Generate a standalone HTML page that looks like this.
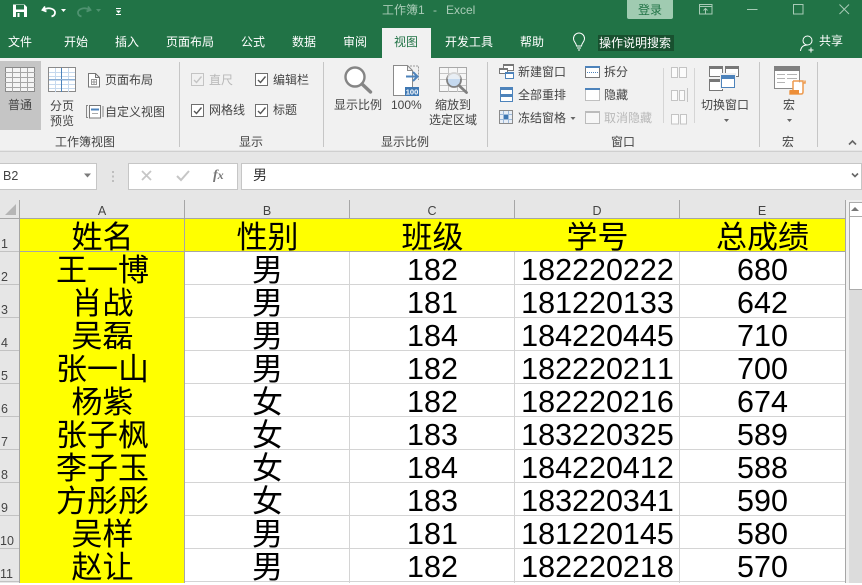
<!DOCTYPE html>
<html><head><meta charset="utf-8"><style>
html,body{margin:0;padding:0}
body{width:862px;height:583px;overflow:hidden;position:relative;background:#fff;font-family:"Liberation Sans","Noto Sans CJK SC",sans-serif;font-size:12px;color:#444}
.a{position:absolute}
.t{position:absolute;white-space:nowrap;line-height:16px;height:16px}
.w{color:#fff}.g{color:#b8b8b8}.c{text-align:center}
.r{position:absolute;left:20px;width:825px;height:33px;display:flex;color:#000;font-size:30.5px;line-height:33px;text-align:center;font-kerning:none}
.r div{width:165px;flex:none;position:relative;top:2px}
.r div:nth-child(1),.r div:nth-child(2){font-size:31px}
.r.z div{font-size:31px}
.n{position:absolute;left:1px;width:18px;line-height:14px;font-size:12.5px;color:#444}
.h{position:absolute;top:203px;line-height:16px;font-size:12.5px;color:#444;text-align:center}
</style></head><body>
<div class="a" style="left:0;top:0;width:862px;height:58px;background:#217346"></div>
<div class="a" style="left:382px;top:28px;width:49px;height:30px;background:#f1f1f1"></div>
<div class="a" style="left:0;top:58px;width:862px;height:92px;background:#f1f1f1"></div>
<div class="a" style="left:0;top:150px;width:862px;height:50px;background:#e6e6e6"></div>
<div class="a" style="left:0;top:151px;width:862px;height:1px;background:#cfcfcf"></div>
<div class="a" style="left:0;top:61px;width:41px;height:69px;background:#c5c5c5"></div>

<div class="a" style="left:627px;top:0;width:46px;height:19px;background:#a0cbb1;border-radius:0 0 2px 2px"></div>
<div class="a" style="left:598px;top:35px;width:76px;height:16px;background:#18502f"></div>

<div class="t" style="left:382px;top:2px;color:#a9cbb7">工作簿1</div>
<div class="t" style="left:433px;top:2px;color:#a9cbb7">-</div>
<div class="t" style="left:446px;top:2px;color:#a9cbb7">Excel</div>
<div class="t" style="left:638px;top:2px;color:#217346">登录</div>
<div class="t w" style="left:8px;top:34px">文件</div>
<div class="t w" style="left:64px;top:34px">开始</div>
<div class="t w" style="left:115px;top:34px">插入</div>
<div class="t w" style="left:166px;top:34px">页面布局</div>
<div class="t w" style="left:241px;top:34px">公式</div>
<div class="t w" style="left:292px;top:34px">数据</div>
<div class="t w" style="left:343px;top:34px">审阅</div>
<div class="t" style="left:394px;top:34px;color:#217346">视图</div>
<div class="t w" style="left:445px;top:34px">开发工具</div>
<div class="t w" style="left:520px;top:34px">帮助</div>
<div class="t w" style="left:599px;top:35px">操作说明搜索</div>
<div class="t w" style="left:819px;top:33px">共享</div>

<div class="t" style="left:8px;top:97px">普通</div>
<div class="t" style="left:50px;top:98px">分页</div>
<div class="t" style="left:50px;top:113px">预览</div>
<div class="t" style="left:105px;top:72px">页面布局</div>
<div class="t" style="left:105px;top:104px">自定义视图</div>
<div class="t" style="left:55px;top:134px">工作簿视图</div>
<div class="t g" style="left:209px;top:72px">直尺</div>
<div class="t" style="left:273px;top:72px">编辑栏</div>
<div class="t" style="left:209px;top:102px">网格线</div>
<div class="t" style="left:273px;top:102px">标题</div>
<div class="t" style="left:239px;top:134px">显示</div>
<div class="t" style="left:334px;top:97px">显示比例</div>
<div class="t" style="left:391px;top:97px">100%</div>
<div class="t" style="left:435px;top:97px">缩放到</div>
<div class="t" style="left:429px;top:112px">选定区域</div>
<div class="t" style="left:381px;top:134px">显示比例</div>
<div class="t" style="left:518px;top:64px">新建窗口</div>
<div class="t" style="left:518px;top:87px">全部重排</div>
<div class="t" style="left:518px;top:110px">冻结窗格</div>
<div class="t" style="left:604px;top:64px">拆分</div>
<div class="t" style="left:604px;top:87px">隐藏</div>
<div class="t g" style="left:604px;top:110px">取消隐藏</div>
<div class="t" style="left:611px;top:134px">窗口</div>
<div class="t" style="left:701px;top:97px">切换窗口</div>
<div class="t" style="left:783px;top:97px">宏</div>
<div class="t" style="left:782px;top:134px">宏</div>

<div class="a" style="left:0;top:163px;width:96px;height:25px;background:#fff;border:1px solid #c6c6c6;border-left:0"></div>
<div class="a" style="left:128px;top:163px;width:108px;height:25px;background:#fff;border:1px solid #c6c6c6"></div>
<div class="a" style="left:241px;top:163px;width:619px;height:25px;background:#fff;border:1px solid #c6c6c6"></div>
<div class="t" style="left:3px;top:168px;font-size:12.5px">B2</div>
<div class="t" style="left:213px;top:167px;font-family:'Liberation Serif',serif;font-style:italic;font-size:14px;font-weight:bold;color:#777">f<span style="font-size:12px">x</span></div>
<div class="t" style="left:253px;top:167px;font-size:14px;color:#333">男</div>

<!-- sheet -->
<div class="a" style="left:0;top:200px;width:845px;height:18px;background:#e6e6e6"></div>
<div class="a" style="left:0;top:218px;width:19px;height:365px;background:#e6e6e6"></div>
<div class="a" style="left:20px;top:219px;width:164px;height:364px;background:#ff0"></div>
<div class="a" style="left:185px;top:219px;width:660px;height:32px;background:#ff0"></div>
<div class="h" style="left:20px;width:164px">A</div>
<div class="h" style="left:185px;width:164px">B</div>
<div class="h" style="left:350px;width:164px">C</div>
<div class="h" style="left:515px;width:164px">D</div>
<div class="h" style="left:680px;width:164px">E</div>

<svg class="a" style="left:0;top:0" width="862" height="583" viewBox="0 0 862 583" fill="none" shape-rendering="crispEdges">
<!-- grid -->
<g fill="#d4d4d4">
<rect x="349" y="252" width="1" height="331"/><rect x="514" y="252" width="1" height="331"/><rect x="679" y="252" width="1" height="331"/>
<rect x="185" y="284" width="660" height="1"/><rect x="185" y="317" width="660" height="1"/><rect x="185" y="350" width="660" height="1"/><rect x="185" y="383" width="660" height="1"/><rect x="185" y="416" width="660" height="1"/><rect x="185" y="449" width="660" height="1"/><rect x="185" y="482" width="660" height="1"/><rect x="185" y="515" width="660" height="1"/><rect x="185" y="548" width="660" height="1"/><rect x="185" y="581" width="660" height="1"/>
</g>
<g fill="#a6a6a6">
<rect x="20" y="251" width="825" height="1"/><rect x="0" y="218" width="845" height="1"/>
<rect x="19" y="200" width="1" height="383"/><rect x="184" y="200" width="1" height="383"/><rect x="845" y="200" width="1" height="383"/>
<rect x="349" y="200" width="1" height="18"/><rect x="514" y="200" width="1" height="18"/><rect x="679" y="200" width="1" height="18"/>
</g>
<g fill="#c2c2c2"><rect x="0" y="251" width="19" height="1"/><rect x="0" y="284" width="19" height="1"/><rect x="0" y="317" width="19" height="1"/><rect x="0" y="350" width="19" height="1"/><rect x="0" y="383" width="19" height="1"/><rect x="0" y="416" width="19" height="1"/><rect x="0" y="449" width="19" height="1"/><rect x="0" y="482" width="19" height="1"/><rect x="0" y="515" width="19" height="1"/><rect x="0" y="548" width="19" height="1"/><rect x="0" y="581" width="19" height="1"/></g>
<!-- scrollbar -->
<rect x="846" y="200" width="16" height="383" fill="#f0f0f0"/>
<rect x="849" y="217" width="13" height="366" fill="#dcdcdc"/>
<rect x="849.500" y="202.500" width="13" height="14" fill="#fff" stroke="#ababab"/>
<rect x="849.500" y="216.500" width="13" height="73" fill="#fff" stroke="#ababab"/>
<path d="M851 211h8l-4-4z" fill="#777" shape-rendering="auto"/>
<path d="M5 215h11v-11z" fill="#b5b5b5" shape-rendering="auto"/>
<!-- separators -->
<g fill="#c6c6c6"><rect x="179" y="62" width="1" height="85"/><rect x="323" y="62" width="1" height="85"/><rect x="487" y="62" width="1" height="85"/><rect x="759" y="62" width="1" height="85"/><rect x="817" y="62" width="1" height="85"/></g>
<g fill="#d5d5d5"><rect x="663" y="68" width="1" height="55"/><rect x="694" y="68" width="1" height="55"/></g>

<g shape-rendering="auto">
<!-- save -->
<path d="M13 4.500h11.500l2.500 2.500v10h-14z" fill="#fff"/><rect x="16" y="5" width="8" height="4.500" fill="#217346"/><rect x="16" y="12" width="8" height="5" fill="#217346"/><rect x="17.500" y="13" width="2" height="4" fill="#fff"/>
<!-- undo/redo -->
<path d="M45 6.500l-2.500 3.500 4 1.500M43.500 10c5-3.500 12-1 11.500 3 -.2 2-1.500 3-3.500 3.500" stroke="#fff" stroke-width="1.800"/>
<path d="M61 9h5l-2.500 3z" fill="#fff"/>
<path d="M88 6.500l2.500 3.500 -4 1.500M89.500 10c-5-3.500-12-1-11.500 3 .2 2 1.500 3 3.500 3.500" stroke="#4f9270" stroke-width="1.800"/>
<path d="M96 9h5l-2.500 3z" fill="#4f9270"/>
<path d="M116 8.500h5M116 14.500h5" stroke="#fff"/><path d="M116 10.500h5l-2.500 3z" fill="#fff"/>
<!-- window controls -->
<g stroke="#a8cbb6" stroke-width="1"><path d="M699.500 4.500h12.500v9.500h-12.500zM699.500 6.500h12.500M703.500 10.500l2-2 2 2M705.500 8.500v5"/>
<path d="M747 9.500h10.500M793.500 4.500h9.500v9.500h-9.500zM839.500 4.500l9.500 9.500M849 4.500l-9.500 9.500"/></g>
<!-- bulb -->
<path d="M576.500 46c0-3-3-4-3-7.500a5.500 5.500 0 0 1 11 0c0 3.500-3 4.500-3 7.500zM577 48h4M578 50h2" stroke="#fff" stroke-width="1"/>
<!-- person -->
<circle cx="807.500" cy="40.500" r="4.500" stroke="#fff"/><path d="M800.500 51c.5-4 3-6 7-6M811 47.500v5M808.500 50h5" stroke="#fff"/>
<!-- normal grid -->
<g shape-rendering="crispEdges">
<rect x="5.500" y="67.500" width="29" height="24" fill="#f4f4f4" stroke="#8a8a8a"/>
<path d="M5 72.500h30M5 77.500h30M5 82.500h30M5 87.500h30M12.500 68v24M20.500 68v24M27.500 68v24" stroke="#a6a6a6"/>
<rect x="48.500" y="67.500" width="27" height="24" fill="#fff" stroke="#8a8a8a"/>
<path d="M49 72.500h26M49 76.500h26M49 80.500h26M49 84.500h26M49 88.500h26M55.500 68v24M68.500 68v24" stroke="#c6d9ee"/>
<path d="M61.500 68v24" stroke="#4d83bb"/><path d="M49 79.500h26" stroke="#8db0d6"/>
<!-- page layout -->
<path d="M88.500 73.500h7l4 4v9.500h-11zM95.500 73.500v4h4" stroke="#777" fill="#fff"/>
<path d="M91.500 79.500h5v5h-5zM94 79.500v5M91.500 82h5" stroke="#999"/>
<!-- custom view -->
<rect x="89.500" y="105.500" width="11" height="12.500" fill="#fff" stroke="#777"/><path d="M91 109.500h8" stroke="#4d83bb" stroke-width="2"/><path d="M92 113.500h6" stroke="#aaa"/><path d="M86.500 106v11M103 106v11M86 105.500h2M86 117.500h2" stroke="#888"/>
<!-- checkboxes -->
<rect x="191.500" y="73.500" width="12" height="12" fill="#f1f1f1" stroke="#c4c4c4"/>
<rect x="255.500" y="73.500" width="12" height="12" fill="#fff" stroke="#6f6f6f"/>
<rect x="191.500" y="104.500" width="12" height="12" fill="#fff" stroke="#6f6f6f"/>
<rect x="255.500" y="104.500" width="12" height="12" fill="#fff" stroke="#6f6f6f"/>
</g>
<path d="M194 80l2.500 2.500 5-6" stroke="#c4c4c4" stroke-width="1.400"/>
<path d="M258 80l2.500 2.500 5-6M194 111l2.500 2.500 5-6M258 111l2.500 2.500 5-6" stroke="#555" stroke-width="1.400"/>
<!-- magnifier -->
<circle cx="355" cy="77" r="9.500" fill="#fff" stroke="#858585" stroke-width="2.400"/>
<path d="M362 84l8.500 8" stroke="#858585" stroke-width="3.400" stroke-linecap="round"/>
<!-- 100% -->
<path d="M393.500 65.500h14l5 5v25h-19zM407.500 65.500v5h5" stroke="#8a8a8a" fill="#fff"/>
<path d="M410 66h8.500v14" stroke="#9a9a9a" stroke-dasharray="2 1"/>
<path d="M406 76.500h11M413 72l4.500 4.500-4.500 4.500" stroke="#4d83bb" stroke-width="2"/>
<rect x="405" y="87" width="14" height="9" fill="#3f78b3"/>
<text x="412" y="94.500" font-size="7.500" font-weight="bold" text-anchor="middle" fill="#fff" font-family="Liberation Sans">100</text>
<!-- zoom to selection -->
<g shape-rendering="crispEdges"><rect x="439.500" y="67.500" width="27" height="24" fill="#f6f6f6" stroke="#a8a8a8"/><path d="M440 73.500h26M440 79.500h26M440 85.500h26M448.500 68v24M457.500 68v24" stroke="#c4c4c4"/></g>
<circle cx="454" cy="80" r="7" fill="#c5d9ef" stroke="#808080" stroke-width="1.800"/><path d="M447.500 79h13v-1a6.500 6.500 0 0 0-13 0z" fill="#f6f6f6" opacity=".7"/>
<path d="M459 85.500l7.500 7" stroke="#808080" stroke-width="2.800" stroke-linecap="round"/>
<!-- window group -->
<g shape-rendering="crispEdges">
<rect x="503.500" y="64.500" width="10" height="6" fill="#fff" stroke="#777"/><rect x="503" y="64" width="11" height="2" fill="#777"/>
<rect x="499.500" y="68.500" width="8" height="5" fill="#fff" stroke="#777"/><rect x="499" y="68" width="9" height="2" fill="#777"/>
<rect x="505.500" y="72.500" width="8" height="6" fill="#fff" stroke="#4d83bb"/><rect x="505" y="72" width="9" height="2" fill="#4d83bb"/>
<rect x="500.500" y="87.500" width="12" height="14" fill="#fff" stroke="#4d83bb"/><rect x="500" y="87" width="13" height="3" fill="#4d83bb"/><rect x="500" y="94" width="13" height="3" fill="#4d83bb"/>
<rect x="499.500" y="110.500" width="13" height="13" fill="#e8eef6" stroke="#8a8a8a"/><path d="M503.500 111v12M508.500 111v12M500 114.500h12M500 119.500h12" stroke="#9db9d9"/><rect x="504" y="115" width="4" height="4" fill="#3f78b3"/>
<rect x="585.500" y="66.500" width="14" height="11" fill="#fff" stroke="#777"/><rect x="585" y="66" width="15" height="2" fill="#4d83bb"/><path d="M587 72.500h11" stroke="#4d83bb" stroke-dasharray="1 1"/>
<rect x="585.500" y="88.500" width="14" height="12" fill="#fff" stroke="#888" stroke-dasharray="1 1"/><rect x="585" y="88" width="15" height="2" fill="#4d83bb"/>
<rect x="585.500" y="111.500" width="14" height="12" fill="#f6f6f6" stroke="#bbb"/><rect x="585" y="111" width="15" height="2" fill="#bbb"/>
<!-- small disabled -->
<g stroke="#c4c4c4" fill="#fbfbfb">
<path d="M671.500 67.500h6v10h-6zM679.500 67.500h7v10h-7z"/><path d="M671.500 90.500h6v10h-6zM679.500 90.500h5v10h-5z"/><path d="M671.500 114.500h7v9.500h-7zM680.500 114.500h6v9.500h-6z"/>
<path d="M687.500 88v14" fill="none"/>
</g>
<!-- switch windows -->
<rect x="709.500" y="66.500" width="13" height="10" fill="#fff" stroke="#777"/><rect x="709" y="66" width="14" height="3" fill="#777"/>
<rect x="725.500" y="66.500" width="13" height="10" fill="#fff" stroke="#777"/><rect x="725" y="66" width="14" height="3" fill="#777"/>
<rect x="709.500" y="79.500" width="13" height="11" fill="#fff" stroke="#777"/><rect x="709" y="79" width="14" height="3" fill="#777"/>
<rect x="720" y="73" width="16" height="16" fill="#f1f1f1"/>
<rect x="721.500" y="75.500" width="13" height="12" fill="#fff" stroke="#4d83bb"/><rect x="721" y="75" width="14" height="4" fill="#4d83bb"/>
<!-- macro -->
<rect x="774.500" y="66.500" width="25" height="22" fill="#fff" stroke="#8a8a8a"/><rect x="774" y="66" width="26" height="5" fill="#808080"/>
<path d="M777 74.500h8M787 74.500h10M777 78.500h8M787 78.500h10M777 82.500h8" stroke="#b4b4b4"/>
</g>
<path d="M793 81h10v2h2v-2.500M793 81v10h-3v3h11c1.500 0 2-1 2-2V83" fill="#fff" stroke="#ed9a4e" stroke-width="1.500"/>
<rect x="790" y="90" width="9" height="4" fill="#ed8e38"/>
<!-- carets -->
<g fill="#666">
<path d="M570.500 117h5l-2.500 3z"/><path d="M724 119h5l-2.500 3z"/><path d="M787 119h5l-2.500 3z"/><path d="M84 173.500h7l-3.500 4z" fill="#7b7b7b"/>
</g>
<path d="M849 144.500l3.500-3.500 3.500 3.500" stroke="#666" stroke-width="1.600"/>
<path d="M850 173.500l3 3 3-3" transform="translate(2 0)" stroke="#666" stroke-width="1.600"/>
<path d="M113 171v2M113 175.500v2M113 180v2" stroke="#b0b0b0" stroke-width="1.500"/>
<path d="M142 171l9 9M151 171l-9 9" stroke="#c6c6c6" stroke-width="1.800"/>
<path d="M177 176l4 4 8-9" stroke="#c6c6c6" stroke-width="2"/>
</g>
</svg>

<div class="n" style="top:237px">1</div><div class="n" style="top:270px">2</div><div class="n" style="top:303px">3</div><div class="n" style="top:336px">4</div><div class="n" style="top:369px">5</div><div class="n" style="top:402px">6</div><div class="n" style="top:435px">7</div><div class="n" style="top:468px">8</div><div class="n" style="top:501px">9</div><div class="n" style="left:0;top:534px">10</div><div class="n" style="left:0;top:567px">11</div>

<div class="r z" style="top:219px"><div>姓名</div><div>性别</div><div>班级</div><div>学号</div><div>总成绩</div></div>
<div class="r" style="top:252px"><div>王一博</div><div>男</div><div>182</div><div>182220222</div><div>680</div></div>
<div class="r" style="top:285px"><div>肖战</div><div>男</div><div>181</div><div>181220133</div><div>642</div></div>
<div class="r" style="top:318px"><div>吴磊</div><div>男</div><div>184</div><div>184220445</div><div>710</div></div>
<div class="r" style="top:351px"><div>张一山</div><div>男</div><div>182</div><div>182220211</div><div>700</div></div>
<div class="r" style="top:384px"><div>杨紫</div><div>女</div><div>182</div><div>182220216</div><div>674</div></div>
<div class="r" style="top:417px"><div>张子枫</div><div>女</div><div>183</div><div>183220325</div><div>589</div></div>
<div class="r" style="top:450px"><div>李子玉</div><div>女</div><div>184</div><div>184220412</div><div>588</div></div>
<div class="r" style="top:483px"><div>方彤彤</div><div>女</div><div>183</div><div>183220341</div><div>590</div></div>
<div class="r" style="top:516px"><div>吴样</div><div>男</div><div>181</div><div>181220145</div><div>580</div></div>
<div class="r" style="top:549px"><div>赵让</div><div>男</div><div>182</div><div>182220218</div><div>570</div></div>
</body></html>
